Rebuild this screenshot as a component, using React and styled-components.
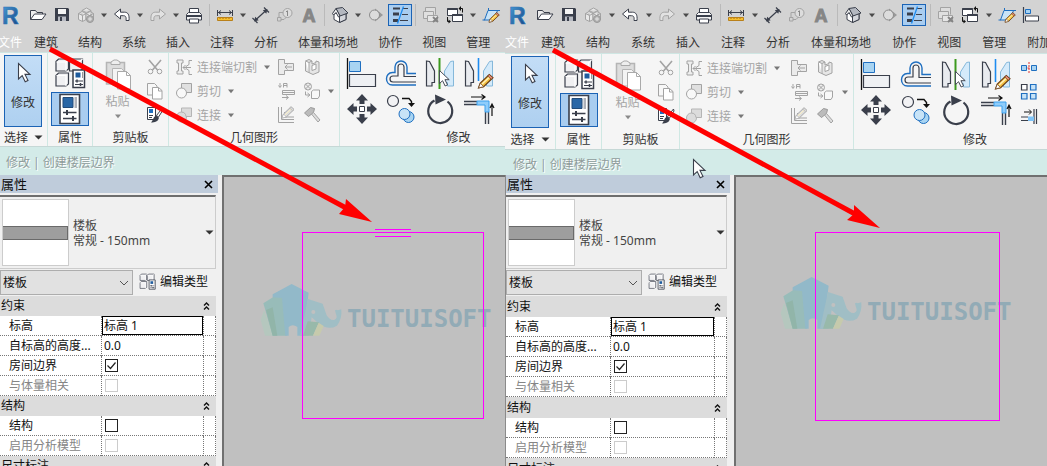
import React, { useState } from 'react';
import styled, { createGlobalStyle, ThemeProvider } from 'styled-components';

const GlobalStyle = createGlobalStyle`
  * {
    box-sizing: border-box;
  }

  body {
    margin: 0;
    overflow: hidden;
    background: #c0c0c0;
    font-family: 'Noto Sans', 'Noto Sans CJK SC', sans-serif;
    font-size: 12px;
    color: #333;
  }

  button, input, select {
    font: inherit;
    color: inherit;
    margin: 0;
    padding: 0;
  }

  button {
    background: none;
    border: 0;
  }

  svg {
    display: block;
    flex: none;
  }
`;

const narrow = {
  grow: 505,
  caret: 12,
  separator: 7,
  quickPad: 0,
  tabStart: -2,
  tabGap: 20,
  tabHeight: 22,
  titleHeight: 19,
  panels: [48, 45, 76, 171, 238],
  selectPad: 4,
  geometryPad: 6,
  geometryColumn: 98,
  toolCell: 39,
  contextHeight: 28,
  contextPad: 6,
  palette: 222,
  paletteEdge: 0,
  grid: 216,
  labelColumn: 101,
  valueColumn: 102,
  combo: 133,
  groupHeight: 20,
};

const wide = {
  grow: 542,
  caret: 13,
  separator: 8,
  quickPad: 2,
  tabStart: 0,
  tabGap: 21,
  tabHeight: 23,
  titleHeight: 21,
  panels: [51, 46, 78, 174, 243],
  selectPad: 6,
  geometryPad: 5,
  geometryColumn: 101,
  toolCell: 40,
  contextHeight: 25,
  contextPad: 8,
  palette: 229,
  paletteEdge: 1,
  grid: 221,
  labelColumn: 104,
  valueColumn: 104,
  combo: 136,
  groupHeight: 21,
};

const Screen = styled.div`
  display: flex;
  height: 100vh;
`;

const Window = styled.section`
  position: relative;
  flex: ${({ theme }) => theme.grow} 1 0;
  min-width: 0;
  overflow: hidden;
  display: flex;
  flex-direction: column;
  background: #d3d3d3;
`;

/* quick access bar */

const QuickBar = styled.div`
  display: flex;
  align-items: center;
  height: 30px;
  padding-left: ${({ theme }) => theme.quickPad}px;
`;

const Logo = styled.div`
  width: 26px;
  flex: none;
`;

const QuickButton = styled.button`
  flex: none;
  width: 24px;
  height: 24px;
  display: flex;
  align-items: center;
  justify-content: center;
  ${({ $on }) => $on && `
    height: 22px;
    background: #a9cdf0;
    border: 1px solid #1b63b5;
  `}
`;

const CaretButton = styled.button`
  flex: none;
  width: ${({ theme }) => theme.caret}px;
  height: 24px;
  display: flex;
  align-items: center;
  justify-content: center;
`;

const QuickSeparator = styled.span`
  flex: none;
  width: ${({ theme }) => theme.separator}px;
  height: 22px;
  display: flex;
  justify-content: center;

  &::before {
    content: '';
    width: 1px;
    background: #bababa;
  }
`;

/* tabs */

const Tabs = styled.nav`
  display: flex;
  height: ${({ theme }) => theme.tabHeight}px;
  margin-left: ${({ theme }) => theme.tabStart}px;
`;

const Tab = styled.a`
  flex: none;
  margin-right: ${({ theme, $file }) => ($file ? 12 : theme.tabGap)}px;
  line-height: 26px;
  color: ${({ $file }) => ($file ? '#fff' : '#333')};
  text-decoration: none;
  white-space: nowrap;
`;

/* ribbon */

const Ribbon = styled.div`
  display: flex;
  background: #f5f5f5;
  border-top: 1px solid #cfe6e3;
  border-bottom: 1px solid #c6d8d6;
`;

const PanelBox = styled.div`
  flex: none;
  width: ${({ theme, $index }) => theme.panels[$index]}px;
  padding-top: 2px;
  border-right: 1px solid #cfe8e3;
`;

const PanelBody = styled.div`
  display: flex;
  height: 72px;
`;

const PanelTitle = styled.div`
  display: flex;
  align-items: center;
  justify-content: center;
  gap: 6px;
  height: ${({ theme }) => theme.titleHeight}px;
  line-height: 18px;
  padding-top: 2px;
  white-space: nowrap;
`;

const ModifyButton = styled.button`
  width: 38px;
  margin-left: ${({ theme }) => theme.selectPad}px;
  display: flex;
  flex-direction: column;
  align-items: center;
  justify-content: flex-start;
  padding-top: 4px;
  gap: 7px;
  background: linear-gradient(#c3ddf6, #aed0f0);
  border: 1px solid #1b63b5;
  white-space: nowrap;
`;

const PropertyButtons = styled.div`
  flex: 1;
  display: flex;
  flex-direction: column;
  align-items: center;
`;

const PropertyButton = styled.button`
  width: 38px;
  height: 36px;
  display: flex;
  align-items: center;
  justify-content: center;
  ${({ $on }) => $on && `
    height: 34px;
    margin-top: 1px;
    background: #a9cdf0;
    border: 1px solid #1b63b5;
  `}
`;

const PasteButton = styled.button`
  flex: 1;
  display: flex;
  flex-direction: column;
  align-items: center;
  justify-content: flex-start;
  padding-top: 3px;
  gap: 3px;
  color: #a5a5a5;
  line-height: 18px;
`;

const SmallColumn = styled.div`
  flex: none;
  width: ${({ $width }) => $width}px;
  display: flex;
  flex-direction: column;
`;

const SmallButton = styled.button`
  flex: none;
  width: 26px;
  height: 24px;
  display: flex;
  align-items: center;
  justify-content: center;
`;

const GeometryRows = styled.div`
  padding-left: ${({ theme }) => theme.geometryPad}px;
`;

const GeometryRow = styled.div`
  display: flex;
  height: 24px;
`;

const GeometryButton = styled.button`
  flex: none;
  width: ${({ theme }) => theme.geometryColumn}px;
  display: flex;
  align-items: center;
  color: #a5a5a5;
  white-space: nowrap;

  span {
    margin: 0 6px 0 4px;
  }
`;

const Tools = styled.div`
  display: grid;
  grid-template-columns: repeat(4, ${({ theme }) => theme.toolCell}px);
  grid-auto-rows: 36px;
  padding-left: 2px;
`;

const Tool = styled.button`
  display: flex;
  align-items: center;
  justify-content: center;
`;

const ContextBar = styled.div`
  flex: none;
  display: flex;
  align-items: center;
  height: ${({ theme }) => theme.contextHeight}px;
  padding: 2px 0 0 ${({ theme }) => theme.contextPad}px;
  background: #d3ebe8;
  color: #8f9c9b;
  text-shadow: 1px 1px 0 #fff;
`;

/* properties palette */

const Workspace = styled.div`
  flex: 1;
  min-height: 0;
  display: flex;
`;

const Palette = styled.aside`
  flex: none;
  width: ${({ theme }) => theme.palette}px;
  overflow: hidden;
  background: #f0f0f0;
  border-left: ${({ theme }) => theme.paletteEdge}px solid #8a8a8a;
`;

const PaletteHeader = styled.header`
  display: flex;
  align-items: center;
  justify-content: space-between;
  height: 18px;
  margin-right: 4px;
  padding: 0 5px 0 1px;
  background: #bfccdb;
  font-size: 13px;
  line-height: 16px;
  color: #111;
`;

const TypeSelector = styled.button`
  display: flex;
  align-items: center;
  width: ${({ theme }) => theme.grid}px;
  height: 74px;
  margin-top: 2px;
  padding: 0 1px 0 2px;
  border-top: 2px solid #6e6e6e;
  border-right: 1px solid #ccc;
  border-bottom: 1px solid #ccc;
  line-height: 15px;
  text-align: left;
  color: #444;
`;

const Thumbnail = styled.span`
  width: 67px;
  height: 67px;
  padding-top: 26px;
  background: #fff;
  border: 1px solid #ccc;

  &::before {
    content: '';
    display: block;
    height: 12px;
    background: #9e9e9e;
    border: 1px solid #6a6a6a;
    border-left: 0;
  }
`;

const TypeName = styled.span`
  flex: 1;
  padding-left: 4px;
`;

const FilterRow = styled.div`
  display: flex;
  padding: 1px 0;
`;

const Combo = styled.div`
  position: relative;
  width: ${({ theme }) => theme.combo}px;

  select {
    appearance: none;
    display: block;
    width: 100%;
    height: 25px;
    padding-left: 2px;
    background: #e1e1e1;
    border: 1px solid #adadad;
    border-radius: 0;
    color: #111;
  }

  svg {
    position: absolute;
    top: 10px;
    right: 4px;
    pointer-events: none;
  }
`;

const EditType = styled.button`
  display: flex;
  align-items: center;
  gap: 4px;
  margin-left: 6px;
  height: 22px;
  color: #111;
  white-space: nowrap;
`;

const Grid = styled.table`
  width: ${({ theme }) => theme.grid}px;
  table-layout: fixed;
  border-spacing: 0;
  background: #fff;
  line-height: 18px;
  color: #111;
`;

const LabelCol = styled.col`
  width: ${({ theme }) => theme.labelColumn}px;
`;

const ValueCol = styled.col`
  width: ${({ theme }) => theme.valueColumn}px;
`;

const GroupHead = styled.th`
  height: ${({ theme }) => theme.groupHeight}px;
  padding: 0 5px 0 1px;
  background: #dcdcdc;
  font-weight: 400;
  text-align: left;

  div {
    display: flex;
    align-items: center;
    justify-content: space-between;
  }
`;

const LabelCell = styled.th`
  height: 20px;
  padding: 0 0 0 9px;
  border-bottom: 1px dotted #777;
  font-weight: 400;
  text-align: left;
  white-space: nowrap;
  color: ${({ $off }) => ($off ? '#858585' : '#111')};
`;

const Cell = styled.td`
  height: 20px;
  padding: 0;
  border-left: 1px dotted #777;
  border-bottom: 1px dotted #777;

  &:last-child {
    border-right: 1px dotted #777;
  }
`;

const ValueInput = styled.input`
  display: block;
  width: 100%;
  height: 19px;
  padding: 0 0 1px ${({ $current }) => ($current ? 1 : 2)}px;
  background: #fff;
  border: ${({ $current }) => ($current ? '1px solid #000' : '0')};
`;

const CheckWrap = styled.span`
  display: grid;
  width: 13px;
  height: 13px;
  margin-left: 3px;

  input, svg {
    grid-area: 1 / 1;
  }

  input {
    appearance: none;
    width: 13px;
    height: 13px;
    background: #fff;
    border: 1px solid #222;
  }

  input:disabled {
    border-color: #ccc;
  }

  svg {
    z-index: 1;
    pointer-events: none;
  }
`;

const Canvas = styled.main`
  flex: 1;
  min-width: 0;
  background: #c0c0c0;
  border-left: 2px solid #707070;
  border-top: 2px solid #707070;

  svg {
    width: 100%;
    height: 100%;
  }
`;

const Overlay = styled.svg`
  position: absolute;
  top: 0;
  left: 0;
  width: 100%;
  height: 100%;
  pointer-events: none;
`;

/* icons */

const dark = '#3a3f4b';
const gray = '#a3a3a3';
const blue = '#1f6fc0';
const sky = '#a8d4f2';

const Icon = ({ size = 24, height, children }) => (
  <svg width={size} height={height || size} viewBox={`0 0 ${size} ${height || size}`} fill="none" aria-hidden="true">
    {children}
  </svg>
);

const Caret = ({ color = '#4a4a4a' }) => (
  <Icon size={8} height={5}><path d="M1 .5h6L4 4.200z" fill={color} /></Icon>
);

const WideCaret = () => (
  <Icon size={9} height={5}><path d="M.5 .5h8l-4 4z" fill="#333" /></Icon>
);

const Pencil = ({ x, y, color = '#f6c343', edge = '#6b3f16' }) => (
  <g transform={`translate(${x} ${y})`}>
    <path d="M0 12L1.500 8 9 .8 12 3.500 4.300 11z" fill={color} stroke={edge} />
    <path d="M0 12L1.500 8l2.800 3z" fill="#fff" stroke={edge} strokeWidth=".6" />
    <path d="M3 8.800L10 2.300" stroke="#fff3c4" />
    <path d="M9 .8l3 2.700-1.300 1.300-3-2.700z" fill={color === '#f6c343' ? '#e58a7b' : color} stroke={edge} strokeWidth=".6" />
  </g>
);

const PointerShape = ({ x = 0, y = 0 }) => (
  <path transform={`translate(${x} ${y})`} d="M.5.5V16l3.700-3.400 3 6.200 2.800-1.300-3-6.100h5z" fill="#fff" stroke={dark} strokeWidth="1.100" />
);

const OpenIcon = () => (
  <Icon>
    <path d="M4.500 16.500v-9h5l1.500 2h5.500v3" fill="#eee" stroke={dark} />
    <path d="M4.500 16.500l4-5.500h11.500l-4 5.500z" fill="#fff" stroke={dark} />
  </Icon>
);

const SaveIcon = () => (
  <Icon>
    <path d="M5 5h13l1 1v12H5z" fill={dark} />
    <path d="M8 6h8v5H8z" fill="#f4f4f4" />
    <path d="M8 13.500h8V18H8z" fill="#b9bcc4" />
    <path d="M10 14h2v4h-2z" fill={dark} />
  </Icon>
);

const CubesIcon = () => (
  <Icon>
    <path d="M8 7.500L12.500 5 17 7.500v5L12.500 15 8 12.500zM8 7.500l4.500 2.300L17 7.500M12.500 10v5" fill="#e8e8e8" stroke={gray} />
    <path d="M4.500 10.500L8 8.500l4 2v6l-3.500 2-4-2zM4.500 10.500l4 2 3.500-2M8.500 12.500v6" fill="#e8e8e8" stroke={gray} />
    <path d="M12 10.500l4-2 3.500 2v6l-4 2-3.500-2zM12 10.500l3.500 2 4-2M15.500 12.500v6" fill="#dedede" stroke={gray} />
    <circle cx="16" cy="16" r="3.500" fill="#b0b0b0" stroke="#999" />
    <path d="M14 16h4M16 14v4" stroke="#e4e4e4" />
  </Icon>
);

const UndoShape = 'M4.500 11l6-5v3.200h4c3.500 0 5 2.500 4.500 8.300h-3c.5-3.700-.5-4.800-2.500-4.800h-3v3.300z';

const UndoIcon = () => (
  <Icon><path d={UndoShape} fill="#fff" stroke={dark} /></Icon>
);

const RedoIcon = () => (
  <Icon><path d={UndoShape} fill="#e2e2e2" stroke={gray} transform="matrix(-1 0 0 1 24 0)" /></Icon>
);

const PrintIcon = () => (
  <Icon>
    <path d="M7.500 10V5.500h9V10" fill="#fff" stroke={dark} />
    <path d="M4.500 11.500l2-2h11l2 2v5.500h-15z" fill="#f4f4f4" stroke={dark} />
    <path d="M5 12h14v2H5z" fill={dark} />
    <path d="M7.500 16h9v4h-9z" fill="#fff" stroke={dark} />
  </Icon>
);

const MeasureIcon = () => (
  <Icon>
    <path d="M4.500 7v6M19.500 7v6M5 9.500h14M8 7.500L5.500 9.500l2.500 2M16 7.500l2.500 2-2.500 2" stroke={dark} />
    <path d="M4.500 14.500h15v3h-15z" fill="#f7bf2f" stroke="#b9801a" />
    <path d="M7 15v1M10 15v1M13 15v1M16 15v1" stroke="#a86e12" />
  </Icon>
);

const DimensionIcon = () => (
  <Icon>
    <path d="M6 17.500L17.500 7M3.500 15l5 5M15 4.500l5 5" stroke={dark} strokeWidth="1.200" />
    <path d="M5 18.500l1.200-4.700 3.500 3.500zM18.500 6l-4.700 1.200 3.500 3.500z" fill={dark} />
  </Icon>
);

const TagIcon = () => (
  <Icon>
    <path d="M4.500 14.500h3.500v3.500h-3.500zM6 14v-4.500h4M8 16.500h3l3-3" stroke={gray} />
    <circle cx="14.500" cy="10" r="4.500" fill="#ddd" stroke={gray} />
    <path d="M13 8.800l1.500-1V13" stroke="#888" />
  </Icon>
);

const TextIcon = () => (
  <Icon>
    <text x="12" y="19" textAnchor="middle" fontFamily="Liberation Sans, sans-serif" fontWeight="700" fontSize="18" fill="#868686" stroke="#868686">A</text>
  </Icon>
);

const HouseIcon = () => (
  <Icon>
    <path d="M6 11v5.500l5.500 3 6.500-3v-6l-5-3z" fill="#fff" stroke={dark} />
    <path d="M11.500 12.500v7l6.500-3v-6z" fill="#d4d6db" stroke={dark} />
    <path d="M8 5.500l6.500-1 5.500 5.500-8 3z" fill="#b4b8c0" stroke={dark} />
    <path d="M4.500 10.500L8 5.500l4 7.500-1.500 1L8 9.500 5.500 12z" fill="#eee" stroke={dark} />
  </Icon>
);

const SectionIcon = () => (
  <Icon>
    <path d="M11 5.500l8 6.500-8 6.500z" fill="#999" />
    <circle cx="10.500" cy="12" r="5" fill="#dcdcdc" stroke="#8d8d8d" />
  </Icon>
);

const ThinLinesIcon = () => (
  <Icon size={20}>
    <path d="M3 3.500h7" stroke={dark} strokeWidth="2" />
    <path d="M3 9h6" stroke={dark} strokeWidth="3" />
    <path d="M3 15.500h5" stroke={dark} strokeWidth="3" />
    <path d="M13 3.500h5M12 9.500h6M10 15.500h8" stroke={dark} />
    <path d="M13.500 1.500L7.500 18.500" stroke="#1e8cf0" strokeWidth="1.300" />
  </Icon>
);

const CloseViewsIcon = () => (
  <Icon>
    <path d="M6.500 8.500v-4h10v7" fill="#ddd" stroke={gray} />
    <path d="M4.500 8.500h10v7h-10z" fill="#e0e0e0" stroke={gray} />
    <path d="M8.500 12.500h10v6h-10z" fill="#e6e6e6" stroke={gray} />
    <path d="M14 14l5 5M19 14l-5 5" stroke="#848484" strokeWidth="1.800" />
  </Icon>
);

const SwitchIcon = () => (
  <Icon>
    <path d="M4.500 5.500h10v7h-10z" fill="#fff" stroke={dark} />
    <path d="M4.500 6h10" stroke={dark} strokeWidth="2" />
    <path d="M9.500 11.500h10v7h-10z" fill="#fff" stroke={dark} />
    <path d="M9.500 12h10" stroke={dark} strokeWidth="2" />
    <path d="M17 5.500h2.500v4M4.500 14v4.500H6" stroke="#111" />
    <path d="M18 3l-2.500 2.500L18 8zM5.500 16.500L8 18.500l-2.500 2z" fill="#111" />
  </Icon>
);

const SketchIcon = () => (
  <Icon>
    <path d="M5.500 17L9 7.500h9.500L15 17z" fill="#c9e3f6" stroke={blue} />
    <path d="M3.500 17h2.500M9.500 5v3M18 7.500h3" stroke={blue} />
    <g transform="translate(10 9) scale(.85)"><Pencil x={0} y={0} /></g>
  </Icon>
);

const AlignQuickIcon = () => (
  <Icon>
    <path d="M4.500 4v16" stroke={dark} strokeWidth="1.200" />
    <path d="M6.500 6.500h5v4h-5z" fill={sky} stroke={blue} />
    <path d="M6.500 13h13v5h-13z" fill="#fff" stroke={dark} />
  </Icon>
);

const CursorIcon = () => (
  <Icon size={24} height={26}><PointerShape x={7} y={3} /></Icon>
);

const TypePropsIcon = ({ size = 32 }) => (
  <svg width={size} height={size} viewBox="0 0 32 32" fill="none" aria-hidden="true">
    <path d="M2 4.500L4.500 2h10v10L12 14H2zM15.500 4.500L18 2h10.500v10l-2 2h-11zM2 18.500l2.500-2.500h10v11L12 29H2z" fill="#f0f0f2" stroke={dark} strokeWidth="1.200" />
    <path d="M2.500 5h9.500v9M16 5h9.500v8M12 5l2.500-3M25.500 5l3-3M2.500 18.500H12V29" stroke="#fff" strokeWidth="1.200" />
    <path d="M19 13h11.500v17.500H19z" fill="#fff" stroke={dark} strokeWidth="1.500" />
    <path d="M21.500 15.500h5v5h-5z" fill="#1f5c9e" />
    <path d="M28.500 15v6" stroke="#999" />
    <path d="M21 24h8M21 27.500h8" stroke={dark} />
    <path d="M23 22.500v3M26.500 26v3" stroke={dark} strokeWidth="1.500" />
  </svg>
);

const PropsIcon = () => (
  <Icon size={24} height={32}>
    <path d="M2 1.500h19.500v29H2z" fill="#fff" stroke={dark} strokeWidth="1.600" />
    <path d="M5 4.500h10v10H5z" fill="#2a67a6" stroke="#234b78" />
    <path d="M16.500 4h2.500v11h-2.500z" fill="#aeb2ba" />
    <path d="M5 19.500h13.500M5 25.500h13.500" stroke={dark} strokeWidth="1.300" />
    <path d="M9 17v5M15 23v5" stroke={dark} strokeWidth="2" />
  </Icon>
);

const PasteIcon = () => (
  <Icon size={28} height={32}>
    <path d="M2.500 4.500h18V26h-18z" fill="#ddd" stroke="#b5b5b5" strokeWidth="1.500" />
    <path d="M7 6.500V4l3-2h3l3 2v2.500z" fill="#eee" stroke="#aaa" />
    <path d="M8.500 10.500h9l3 3V27h-12z" fill="#f4f4f4" stroke="#b5b5b5" />
    <path d="M13.500 13.500h9l4 4V31h-13z" fill="#fff" stroke="#aaa" />
    <path d="M22.500 13.500v4h4" stroke="#aaa" />
  </Icon>
);

const CutIcon = () => (
  <Icon size={18}>
    <path d="M3 2l8.500 10M15 2L6.500 12" stroke={gray} strokeWidth="1.600" />
    <circle cx="4.500" cy="13.500" r="2.300" stroke={gray} />
    <circle cx="13.500" cy="13.500" r="2.300" stroke={gray} />
  </Icon>
);

const CopyIcon = () => (
  <Icon size={18}>
    <path d="M1.500 1.500h7l2.500 2.500v9h-9.500z" fill="#f7f7f7" stroke={gray} />
    <path d="M6.500 5.500h6l3.500 3v8.500h-9.500z" fill="#fff" stroke={gray} />
    <path d="M12.500 5.500v3.500H16" stroke={gray} />
  </Icon>
);

const MatchIcon = () => (
  <Icon size={18}>
    <path d="M1.500 1.500h8v12h-8z" fill="#fff" stroke={dark} />
    <path d="M3 3h4v4H3z" fill={blue} />
    <path d="M3 9.500h4M3 11.500h3" stroke={dark} />
    <path d="M16.500 2l-6 7.500 2 1.500 4.500-7z" fill="#fff" stroke={dark} />
    <path d="M10 9.500l3 2.300c-1 4-4 4.700-8 4.700 2-1.500 2-5.500 5-7z" fill={dark} />
  </Icon>
);

const CopeIcon = () => (
  <Icon size={18}>
    <path d="M2 2h6v3H6.500v8H8v3H2v-3h1.500V5H2z" fill="#eee" stroke={gray} />
    <path d="M17 2.500h-3v4l-3 2v2l3 2v4h3M16 9.500H8M10.500 7L8 9.500l2.500 2.500" stroke={gray} />
  </Icon>
);

const CutGeometryIcon = () => (
  <Icon size={18}>
    <path d="M6.500 1.500h10v9h-10z" fill="#e0e0e0" stroke={gray} />
    <circle cx="6.500" cy="11" r="5" fill="#f8f8f8" stroke={gray} />
  </Icon>
);

const JoinIcon = () => (
  <Icon size={18}>
    <circle cx="6.500" cy="11" r="5" fill="#dcdcdc" stroke="#b5b5b5" />
    <path d="M6.500 2h10v8.500h-5.500c-.3-3-2-4.500-4.500-4.500z" fill="#dcdcdc" stroke="#b5b5b5" />
  </Icon>
);

const WallJoinIcon = () => (
  <Icon size={18}>
    <path d="M1.500 1.500h6v4h9v7h-9v4h-6z" fill="#ebebeb" stroke={gray} />
    <path d="M15 9H8M10.500 6.500L8 9l2.500 2.500" stroke={gray} />
  </Icon>
);

const SplitFaceIcon = () => (
  <Icon size={18}>
    <path d="M2.500 3L6 1.500l3 1.500v3l4-1.500V3l3 1v10l-6 2.500L2.500 13z" fill="#e6e6e6" stroke={gray} />
    <path d="M2.500 3L6 4.500v10.500M6 4.500L9 3M9 7.500l4-1.500v5l-4 1.500z" fill="#fff" stroke={gray} />
  </Icon>
);

const BeamIcon = () => (
  <Icon size={18}>
    <path d="M3 1v4M1.500 3.500l1.500 2 1.500-2M6.500 1.500v4M10 1.500v4M6.500 3.500H10M6.500 1.500H10M5.500 8.500h12v4h-12zM5.500 10.500h12M5 15.500h6M9 13.500l2.500 2-2.500 2" stroke={gray} />
  </Icon>
);

const PaintIcon = () => (
  <Icon size={18}>
    <circle cx="5" cy="4.500" r="3.500" fill="#eee" stroke={gray} />
    <path d="M2.500 2l5 5M7.500 2l-5 5M2.500 9.500V13H6M4.500 11L7 13l-2.500 2" stroke={gray} />
    <path d="M8.500 9.500l2-1.500h6v6l-1.500 2.500H8.500z" fill="#f8f8f8" stroke={gray} />
  </Icon>
);

const JoinEditIcon = () => (
  <Icon size={18}>
    <path d="M1.500 1v15.500H17M4.500 1v12.500H17M7.500 6v5H17" stroke={gray} />
    <Pencil x={5} y={0} color="#ddd" edge="#aaa" />
  </Icon>
);

const HammerIcon = () => (
  <Icon size={18}>
    <path d="M1.500 7l6-5.500 4 1-1 4-5 4z" fill="#bbb" stroke="#999" />
    <path d="M8.500 8l2-1.500 6.500 7.500-2 2z" fill="#ddd" stroke={gray} />
  </Icon>
);

const AlignIcon = () => (
  <Icon size={32}>
    <path d="M1.500 1v31" stroke="#111" strokeWidth="1.300" />
    <path d="M3.500 4.500h11v10h-11z" fill={sky} stroke={blue} />
    <path d="M3.500 17.500h26v12h-26z" fill="#eef0f3" stroke={dark} strokeWidth="1.200" />
  </Icon>
);

const OffsetIcon = () => (
  <Icon size={32}>
    <path d="M31 16.500h-9V10a6 6 0 0 0-12 0v5.500H7.500c-8 0-8 12.500 0 12.500H31" stroke={blue} strokeWidth="1.400" />
    <path d="M31 19.500H19V10a3 3 0 0 0-6 0v9H8c-4 0-4 6 0 6h23" stroke={dark} strokeWidth="1.200" />
  </Icon>
);

const MirrorShapes = () => (
  <>
    <path d="M2.500 4l3 .5 5 9.500V25.500H8V29H2.500z" fill="#e9ebef" stroke={dark} strokeWidth="1.200" />
    <path d="M29.500 4l-3 .5-6 9.500v11.500h3V29h6z" fill="#d4eafa" stroke="#85b8da" />
  </>
);

const MirrorPickIcon = () => (
  <Icon size={32}>
    <MirrorShapes />
    <path d="M15.500 1v31" stroke="#3c9a1e" strokeWidth="2" />
    <g transform="translate(15 13) scale(.85)"><PointerShape /></g>
  </Icon>
);

const MirrorDrawIcon = () => (
  <Icon size={32}>
    <MirrorShapes />
    <path d="M15.500 1v23" stroke="#1e8cf0" strokeWidth="1.600" />
    <g transform="translate(15.500 16.500) scale(1.200)"><Pencil x={0} y={0} /></g>
  </Icon>
);

const MoveIcon = () => (
  <Icon size={32}>
    <path d="M16 1l6 6.500h-3.500V11h-5V7.500H10zM16 31l6-6.500h-3.500V21h-5v3.500H10zM1 16l6.500-6v3.500H11v5H7.500V22zM31 16l-6.500-6v3.500H21v5h3.500V22z" fill={dark} />
    <path d="M13.500 13.500h5v5h-5z" fill="#fff" stroke={dark} />
  </Icon>
);

const CopyToolIcon = () => (
  <Icon size={32}>
    <circle cx="8" cy="8" r="5.500" fill="#f2f2f4" stroke={dark} strokeWidth="1.200" />
    <path d="M17 5.500h7l2.500 3v3" stroke="#111" strokeWidth="1.400" />
    <path d="M23 10h7l-3.500 4z" fill="#111" />
    <circle cx="23.500" cy="24" r="5.500" fill={sky} stroke={blue} />
    <circle cx="19.500" cy="21" r="5.500" fill="#c7e3f7" stroke={blue} />
  </Icon>
);

const RotateIcon = () => (
  <Icon size={32}>
    <path d="M10.500 7.500a12 12 0 1 0 13 1" stroke={dark} strokeWidth="2.200" />
    <path d="M11 1.500l11 5-10.500 5z" fill={dark} />
  </Icon>
);

const TrimIcon = () => (
  <Icon size={32}>
    <path d="M1 8.500h13M1 11.500h13M22.500 19v12M25.500 19v12" stroke={dark} strokeWidth="1.400" />
    <path d="M14 8h12v11h-4v-7h-8z" fill="#8fcdfb" stroke="#3b9fec" />
    <path d="M8 4h13M18.500 1.500L22 4l-3.500 2.500M29 23V11.500M27 15l2-4 2 4" stroke="#111" strokeWidth="1.200" />
  </Icon>
);

const SplitIcon = () => (
  <Icon size={18}>
    <path d="M1.500 6.500h5v5h-5zM11.500 6.500h5v5h-5z" fill={sky} stroke={blue} />
    <path d="M9 3v12M7.500 9h3" stroke="#d33" strokeDasharray="2 1" />
  </Icon>
);

const ArrayIcon = () => (
  <Icon size={18}>
    <path d="M1.500 1.500h5.500v5.500H1.500z" fill="#fff" stroke={dark} strokeWidth="1.200" />
    <path d="M10.500 1.500H16v5.500h-5.500zM1.500 10.500H7V16H1.500zM10.500 10.500H16V16h-5.500z" fill="#c7e3f7" stroke={blue} strokeWidth="1.200" />
  </Icon>
);

const ExtendIcon = () => (
  <Icon size={18}>
    <path d="M1 10h7M1 13.500h7M14 2v15M16.500 2v15" stroke={dark} strokeWidth="1.200" />
    <path d="M8 9.500h6V14H8z" fill="#7fc4f8" />
    <path d="M4 5h7M9 2.500L11.500 5 9 7.500" stroke="#111" />
  </Icon>
);

const ChevronsUp = () => (
  <Icon size={9} height={10}>
    <path d="M2 4.500L4.500 2 7 4.500M2 8.500L4.500 6 7 8.500" stroke="#111" strokeWidth="1.400" />
  </Icon>
);

const quickItems = [
  ['打开', OpenIcon],
  ['保存', SaveIcon],
  ['同步', CubesIcon, true],
  ['放弃', UndoIcon, true],
  ['重做', RedoIcon, true],
  ['打印', PrintIcon],
  null,
  ['测量', MeasureIcon, true],
  ['尺寸标注', DimensionIcon],
  ['标记', TagIcon],
  ['文字', TextIcon],
  null,
  ['三维视图', HouseIcon, true],
  ['剖面', SectionIcon],
  ['细线', ThinLinesIcon, false, true],
  null,
  ['关闭视图', CloseViewsIcon],
  ['切换窗口', SwitchIcon, true],
  ['编辑草图', SketchIcon],
];

const tabs = ['建筑', '结构', '系统', '插入', '注释', '分析', '体量和场地', '协作', '视图', '管理'];

const geometryRows = [
  ['连接端切割', CopeIcon, ['墙连接', WallJoinIcon], ['拆分面', SplitFaceIcon]],
  ['剪切', CutGeometryIcon, ['梁连接', BeamIcon], ['填色', PaintIcon]],
  ['连接', JoinIcon, ['编辑连接', JoinEditIcon], ['拆除', HammerIcon]],
];

const tools = [
  ['对齐', AlignIcon],
  ['偏移', OffsetIcon],
  ['镜像 - 拾取轴', MirrorPickIcon],
  ['镜像 - 绘制轴', MirrorDrawIcon],
  ['移动', MoveIcon],
  ['复制', CopyToolIcon],
  ['旋转', RotateIcon],
  ['修剪', TrimIcon],
];

const groups = [
  {
    title: '约束',
    rows: [
      { label: '标高', text: '标高 1', current: true },
      { label: '自标高的高度...', text: '0.0' },
      { label: '房间边界', checked: true },
      { label: '与体量相关', off: true },
    ],
  },
  {
    title: '结构',
    rows: [
      { label: '结构' },
      { label: '启用分析模型', off: true },
    ],
  },
  { title: '尺寸标注', rows: [] },
];

const Panel = ({ index, title, caret, children }) => (
  <PanelBox $index={index}>
    <PanelBody>{children}</PanelBody>
    <PanelTitle>{title}{caret && <WideCaret />}</PanelTitle>
  </PanelBox>
);

const QuickAccess = ({ extended }) => (
  <QuickBar>
    <Logo>
      <Icon size={22} height={28}>
        <defs>
          <linearGradient id="logo" x1="0" y1="0" x2="1" y2="1">
            <stop offset="0" stopColor="#4aa0dc" />
            <stop offset="1" stopColor="#123f7c" />
          </linearGradient>
        </defs>
        <text x="2" y="23" fontFamily="Liberation Sans, sans-serif" fontWeight="700" fontSize="23" fill="url(#logo)" stroke="#2f74b5" strokeWidth=".6">R</text>
      </Icon>
    </Logo>
    {quickItems.map((item, i) => {
      if (!item) return <QuickSeparator key={i} />;
      const [name, Glyph, caret, on] = item;
      return (
        <React.Fragment key={i}>
          <QuickButton aria-label={name} $on={on}><Glyph /></QuickButton>
          {caret && <CaretButton aria-label={`${name}选项`}><Caret /></CaretButton>}
        </React.Fragment>
      );
    })}
    {extended && <QuickButton aria-label="对齐"><AlignQuickIcon /></QuickButton>}
  </QuickBar>
);

const RibbonBar = ({ extended }) => (
  <Ribbon>
    <Panel index={0} title="选择" caret>
      <ModifyButton><CursorIcon />修改</ModifyButton>
    </Panel>
    <Panel index={1} title="属性">
      <PropertyButtons>
        <PropertyButton aria-label="类型属性"><TypePropsIcon /></PropertyButton>
        <PropertyButton aria-label="属性" $on><PropsIcon /></PropertyButton>
      </PropertyButtons>
    </Panel>
    <Panel index={2} title="剪贴板">
      <PasteButton><PasteIcon />粘贴<Caret color="#8a8a8a" /></PasteButton>
      <SmallColumn $width={26}>
        <SmallButton aria-label="剪切"><CutIcon /></SmallButton>
        <SmallButton aria-label="复制"><CopyIcon /></SmallButton>
        <SmallButton aria-label="匹配类型"><MatchIcon /></SmallButton>
      </SmallColumn>
    </Panel>
    <Panel index={3} title="几何图形">
      <GeometryRows>
        {geometryRows.map(([name, Glyph, ...others], i) => (
          <GeometryRow key={name}>
            <GeometryButton><Glyph /><span>{name}</span><Caret color="#777" /></GeometryButton>
            {others.map(([label, Small]) => (
              <SmallButton key={label} aria-label={label}><Small /></SmallButton>
            ))}
            {i === 1 && <CaretButton aria-label="填色选项"><Caret color="#777" /></CaretButton>}
          </GeometryRow>
        ))}
      </GeometryRows>
    </Panel>
    <Panel index={4} title="修改">
      <Tools>
        {tools.map(([name, Glyph]) => (
          <Tool key={name} aria-label={name}><Glyph /></Tool>
        ))}
      </Tools>
      {extended && (
        <SmallColumn $width={28}>
          <SmallButton aria-label="拆分图元"><SplitIcon /></SmallButton>
          <SmallButton aria-label="阵列"><ArrayIcon /></SmallButton>
          <SmallButton aria-label="延伸"><ExtendIcon /></SmallButton>
        </SmallColumn>
      )}
    </Panel>
  </Ribbon>
);

const Check = ({ id, off, initial }) => {
  const [checked, setChecked] = useState(!!initial);

  return (
    <CheckWrap>
      <input id={id} type="checkbox" disabled={off} checked={checked} onChange={() => setChecked(!checked)} />
      {checked && <Icon size={13}><path d="M2.500 6.500l3 3 5-6" stroke="#222" strokeWidth="1.200" /></Icon>}
    </CheckWrap>
  );
};

const PropertyGrid = ({ name }) => (
  <Grid>
    <colgroup><LabelCol /><ValueCol /><col /></colgroup>
    <tbody>
      {groups.map((group, g) => (
        <React.Fragment key={group.title}>
          <tr>
            <GroupHead colSpan={3}>
              <div>{group.title}<button aria-label={`折叠${group.title}`}><ChevronsUp /></button></div>
            </GroupHead>
          </tr>
          {group.rows.map((row, r) => {
            const id = `${name}-${g}-${r}`;
            return (
              <tr key={id}>
                <LabelCell scope="row" $off={row.off}><label htmlFor={id}>{row.label}</label></LabelCell>
                <Cell>
                  {row.text
                    ? <ValueInput id={id} defaultValue={row.text} $current={row.current} />
                    : <Check id={id} off={row.off} initial={row.checked} />}
                </Cell>
                <Cell />
              </tr>
            );
          })}
        </React.Fragment>
      ))}
    </tbody>
  </Grid>
);

const PropertiesPalette = ({ name }) => (
  <Palette>
    <PaletteHeader>
      属性
      <button aria-label="关闭">
        <Icon size={9}><path d="M1 1l7 7M8 1L1 8" stroke="#000" strokeWidth="1.600" /></Icon>
      </button>
    </PaletteHeader>
    <TypeSelector>
      <Thumbnail />
      <TypeName>楼板<br />常规 - 150mm</TypeName>
      <WideCaret />
    </TypeSelector>
    <FilterRow>
      <Combo>
        <select aria-label="图元过滤器" defaultValue="楼板">
          <option>楼板</option>
        </select>
        <Icon size={10} height={6}><path d="M1 1l4 4 4-4" stroke="#555" /></Icon>
      </Combo>
      <EditType><TypePropsIcon size={17} />编辑类型</EditType>
    </FilterRow>
    <PropertyGrid name={name} />
  </Palette>
);

const Watermark = ({ x, y }) => (
  <g transform={`translate(${x} ${y})`}>
    <g transform="scale(.3333)">
      <path d="M2 108L12 78 42 155H15z" fill="#b5c7be" />
      <path d="M10 58L40 39h40v116H38z" fill="#98bcb9" />
      <path d="M18 78l20-8 14 85H38z" fill="#91b5a9" />
      <path d="M38 31L95 0l51 26-16 129h-18v-26q-14-10-26 0v26H76L66 42l-28-2z" fill="#92b9c9" />
      <path d="M144 45l44 14 12 35q10 16 22 14 12-4 6-17l-3-12q6-4 8 0l11-3q3 28-13 49-26 16-56-7l-20-18-9 55h-26z" fill="#a0bec5" />
      <path d="M143 112l34 3-18 40h-30z" fill="#98b9aa" />
      <path d="M176 116l15 10-13 29h-19z" fill="#c6caac" />
      <circle cx="160" cy="84" r="6" fill="#c0c0c0" />
    </g>
    <text x="87" y="43" fontFamily="DejaVu Sans Mono, monospace" fontWeight="700" fontSize="24" fill="#92abb6">TUITUISOFT</text>
  </g>
);

const RevitWindow = ({ name, theme, extended, outline, mark, arrow, cursor, slabLines }) => (
  <ThemeProvider theme={theme}>
    <Window>
      <QuickAccess extended={extended} />
      <Tabs>
        <Tab href="#" $file>文件</Tab>
        {tabs.map((tab) => <Tab key={tab} href="#">{tab}</Tab>)}
        {extended && <Tab href="#">附加模块</Tab>}
      </Tabs>
      <RibbonBar extended={extended} />
      <ContextBar>修改 | 创建楼层边界</ContextBar>
      <Workspace>
        <PropertiesPalette name={name} />
        <Canvas>
          <svg>
            <Watermark x={mark[0]} y={mark[1]} />
            <rect x={outline[0]} y={outline[1]} width={outline[2]} height={outline[3]} fill="none" stroke="#f0f" />
            {slabLines && <path d="M151 52.500h36M151 59.500h36" stroke="#f0f" />}
          </svg>
        </Canvas>
      </Workspace>
      <Overlay aria-hidden="true">
        <path d={arrow.shaft} stroke="#f00" strokeWidth="5" />
        <path d={arrow.head} fill="#f00" />
        {cursor && <PointerShape x={cursor[0]} y={cursor[1]} />}
      </Overlay>
    </Window>
  </ThemeProvider>
);

export default function App() {
  return (
    <>
      <GlobalStyle />
      <Screen>
        <RevitWindow
          name="before"
          theme={narrow}
          outline={[78.5, 55.5, 181, 186]}
          mark={[36, 107]}
          arrow={{ shaft: 'M50 49L348 209', head: 'M372 222L346 199l-1 8-6 7z' }}
          slabLines
        />
        <RevitWindow
          name="after"
          theme={wide}
          extended
          outline={[79.5, 55.5, 184, 188]}
          mark={[44, 100]}
          arrow={{ shaft: 'M48 50L350 214', head: 'M375 228L349 205v9l-7 6z' }}
          cursor={[188, 159]}
        />
      </Screen>
    </>
  );
}
